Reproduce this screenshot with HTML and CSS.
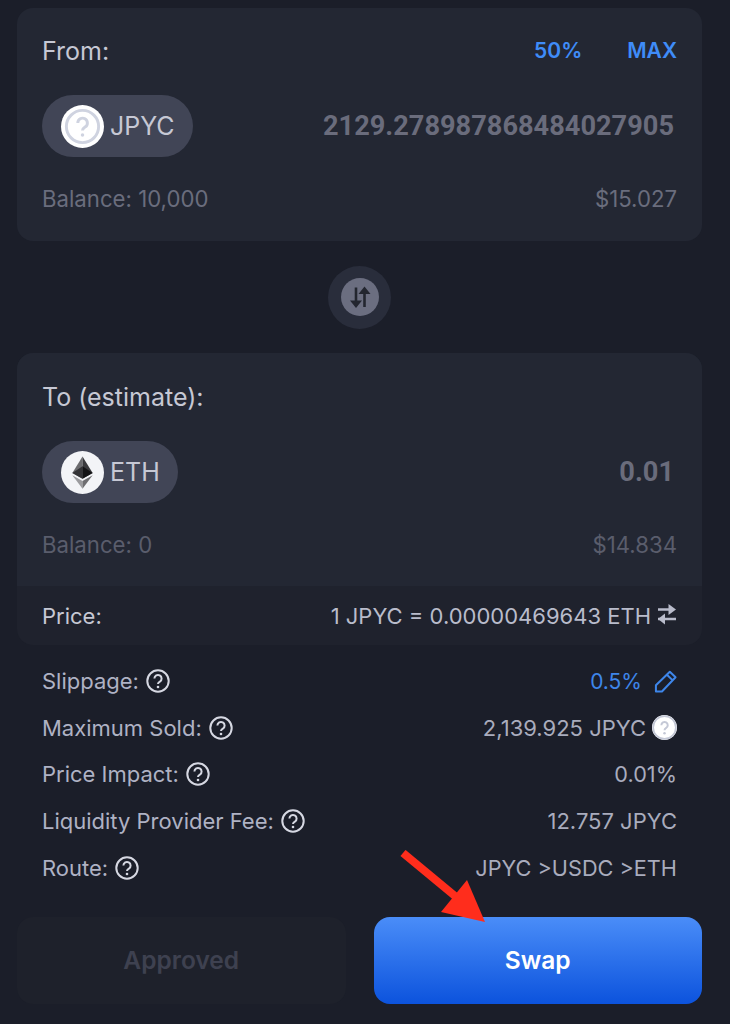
FILE: index.html
```html
<!DOCTYPE html>
<html lang="en">
<head>
<meta charset="utf-8">
<title>Swap</title>
<link rel="stylesheet" href="styles.css">
</head>
<body>
<main class="page">
  <section class="card from-card">
    <div class="card-head">
      <span class="label">From:</span>
      <div class="quick">
        <span>50%</span>
        <span>MAX</span>
      </div>
    </div>
    <div class="token-row">
      <div class="pill">
        <svg class="token-icon" viewBox="0 0 44 44"><circle cx="22" cy="22" r="22" fill="#fff"/><circle cx="22" cy="22" r="16.5" fill="none" stroke="#cfd3e0" stroke-width="3"/><path d="M17.2 18.4a4.9 4.9 0 1 1 7.4 4.2c-1.6 1-2.6 1.8-2.6 3.6" fill="none" stroke="#cfd3e0" stroke-width="3"/><circle cx="22" cy="30.6" r="1.8" fill="#cfd3e0"/></svg>
        <span>JPYC</span>
      </div>
      <span class="amount">2129.278987868484027905</span>
    </div>
    <div class="card-foot">
      <span>Balance: 10,000</span>
      <span>$15.027</span>
    </div>
  </section>

  <div class="switch-wrap">
    <div class="switch">
      <div class="switch-inner">
        <svg viewBox="0 0 38 38"><path d="M15 9.500v15" stroke="#23262f" stroke-width="2.600" fill="none"/><path d="M9 22.500h12l-6 7.500z" fill="#23262f"/><path d="M23.500 29v-15" stroke="#23262f" stroke-width="2.600" fill="none"/><path d="M17.500 16h12l-6-7.500z" fill="#23262f"/></svg>
      </div>
    </div>
  </div>

  <section class="card to-card">
    <div class="to-main">
      <div class="card-head to-head">
        <span class="label">To (estimate):</span>
      </div>
      <div class="token-row">
        <div class="pill">
          <svg class="token-icon" viewBox="0 0 44 44"><circle cx="22" cy="22" r="22" fill="#f3f4f7"/><path d="M22 5.500 11.600 22.500 22 28.500z" fill="#6b6b6e"/><path d="M22 5.500 32.400 22.500 22 28.500z" fill="#3a3a3d"/><path d="M22 15.500 11.600 22.500 22 28.500z" fill="#333336"/><path d="M22 15.500 32.400 22.500 22 28.500z" fill="#141416"/><path d="M11.600 24.800 22 30.800v7.700z" fill="#9b9b9e"/><path d="M32.400 24.800 22 30.800v7.700z" fill="#6e6e71"/></svg>
          <span>ETH</span>
        </div>
        <span class="amount">0.01</span>
      </div>
      <div class="card-foot dim">
        <span>Balance: 0</span>
        <span>$14.834</span>
      </div>
    </div>
    <div class="price-row">
      <span>Price:</span>
      <span class="price-value">1 JPYC = 0.00000469643 ETH
        <svg class="price-swap" viewBox="0 0 20 22"><path d="M1 6.500h13M1 16h18" stroke="#b9bccb" stroke-width="2.400" fill="none"/><path d="M11.500 1 19 6.500l-7.500 5.500z" fill="#b9bccb"/><path d="M8 10.500 1 16l7 5.500z" fill="#b9bccb"/></svg>
      </span>
    </div>
  </section>

  <section class="details">
    <div class="detail">
      <span class="detail-label">Slippage: <svg class="help"><use href="#help"/></svg></span>
      <span class="detail-value blue">0.5%
        <svg class="pencil" viewBox="0 0 24 24"><path d="M2 22.500v-6.500L16.500 1.800l6 5.700L8.300 22.500z M13.500 5l6 5.800" fill="none" stroke="#3e86ea" stroke-width="2.100" stroke-linejoin="round"/></svg>
      </span>
    </div>
    <div class="detail">
      <span class="detail-label">Maximum Sold: <svg class="help"><use href="#help"/></svg></span>
      <span class="detail-value">2,139.925 JPYC
        <svg class="mini-token" viewBox="0 0 44 44"><circle cx="22" cy="22" r="22" fill="#fff"/><circle cx="22" cy="22" r="20" fill="none" stroke="#c4c8d6" stroke-width="3"/><path d="M16.500 18a5.600 5.600 0 1 1 8.500 4.800c-1.800 1.100-3 2.100-3 4" fill="none" stroke="#c4c8d6" stroke-width="3.500"/><circle cx="22" cy="32" r="2.200" fill="#c4c8d6"/></svg>
      </span>
    </div>
    <div class="detail">
      <span class="detail-label">Price Impact: <svg class="help"><use href="#help"/></svg></span>
      <span class="detail-value tight">0.01%</span>
    </div>
    <div class="detail">
      <span class="detail-label">Liquidity Provider Fee: <svg class="help"><use href="#help"/></svg></span>
      <span class="detail-value">12.757 JPYC</span>
    </div>
    <div class="detail">
      <span class="detail-label">Route: <svg class="help"><use href="#help"/></svg></span>
      <span class="detail-value tight">JPYC &gt;USDC &gt;ETH</span>
    </div>
  </section>

  <div class="actions">
    <div class="btn btn-off">Approved</div>
    <div class="btn btn-on">Swap</div>
  </div>

  <svg class="arrow" viewBox="0 0 100 90"><path d="M3 3 61 51" stroke="#ff2d1c" stroke-width="8" fill="none"/><path d="M85 72 67 30 41 62z" fill="#ff2d1c"/></svg>
</main>

<svg class="defs" aria-hidden="true"><symbol id="help" viewBox="0 0 24 24"><circle cx="12" cy="12" r="10.700" fill="none" stroke="#d6d8e2" stroke-width="2"/><path d="M8.400 9.500a3.600 3.600 0 1 1 5.500 3.100c-1.200.7-1.900 1.300-1.900 2.500" fill="none" stroke="#d6d8e2" stroke-width="2"/><circle cx="12" cy="18" r="1.300" fill="#d6d8e2"/></symbol></svg>
</body>
</html>
```

FILE: styles.css
```css
* { box-sizing: border-box; }
html, body { margin: 0; padding: 0; }
body {
  width: 730px;
  height: 1024px;
  overflow: hidden;
  background: #1b1e29;
  font-family: Inter, "Liberation Sans", sans-serif;
  color: #a9acbd;
}
.page {
  position: relative;
  height: 1024px;
  padding: 8px 28px 0 17px;
}
.card {
  background: #232733;
  border-radius: 16px;
  overflow: hidden;
}
.from-card { height: 233px; padding: 0 25px; }
.card-head {
  height: 86px;
  display: flex;
  justify-content: space-between;
  align-items: center;
}
.to-head { height: 87px; }
.label { font-size: 25px; color: #c6c8d4; }
.quick {
  display: flex;
  gap: 45px;
  font-size: 21px;
  font-weight: 600;
  color: #3f8cf8;
  margin-top: -2px;
}
.token-row {
  display: flex;
  justify-content: space-between;
  align-items: center;
  height: 62px;
  margin-top: 1px;
}
.pill {
  display: flex;
  align-items: center;
  height: 62px;
  padding: 0 18px 0 19px;
  gap: 6px;
  border-radius: 31px;
  background: #414556;
  font-size: 25px;
  color: #c6c8d4;
}
.token-icon { width: 43px; height: 43px; flex: none; }
.amount {
  font-family: Roboto, sans-serif;
  font-size: 27.200px;
  font-weight: 700;
  color: #6a6c7c;
  padding-right: 3px;
}
.card-foot {
  display: flex;
  justify-content: space-between;
  align-items: center;
  margin-top: 23px;
  height: 36px;
  font-size: 22.200px;
  color: #6a6d7d;
}
.switch-wrap {
  height: 112px;
  display: flex;
  align-items: center;
  justify-content: center;
}
.switch {
  width: 63px;
  height: 63px;
  border-radius: 50%;
  background: #292d3b;
  display: flex;
  align-items: center;
  justify-content: center;
}
.switch-inner {
  width: 38px;
  height: 38px;
  border-radius: 50%;
  background: #6b6e80;
}
.switch-inner svg { display: block; width: 38px; height: 38px; }
.to-card { height: 292px; background: #1f222d; }
.to-main { height: 233px; padding: 0 25px; background: #232733; }
.to-main .card-foot { color: #5a5d6c; }
.price-row {
  height: 59px;
  padding: 0 25px;
  display: flex;
  justify-content: space-between;
  align-items: center;
  font-size: 22px;
  color: #c6c8d4;
}
.price-value { display: flex; align-items: center; gap: 6px; color: #b9bccb; }
.price-swap { width: 20px; height: 22px; margin-top: -4px; }
.details { margin-top: 13px; padding: 0 25px; }
.detail {
  height: 46.600px;
  display: flex;
  justify-content: space-between;
  align-items: center;
  font-size: 22px;
}
.detail-label { display: flex; align-items: center; gap: 7px; color: #afb2c4; }
.detail-value { display: flex; align-items: center; gap: 6px; color: #a9acbd; }
.detail-value.tight { font-size: 21.700px; }
.detail-value.blue { color: #3e86ea; gap: 12px; font-size: 21px; }
.help { width: 24px; height: 24px; }
.pencil { width: 23px; height: 23px; }
.mini-token { width: 25px; height: 25px; }
.actions {
  position: absolute;
  left: 17px;
  right: 28px;
  top: 917px;
  display: flex;
  gap: 28px;
}
.btn {
  flex: 1;
  height: 87px;
  border-radius: 16px;
  display: flex;
  align-items: center;
  justify-content: center;
  font-size: 24.500px;
  font-weight: 600;
  padding-bottom: 2px;
}
.btn-off { background: #1e212b; color: #3e4150; }
.btn-on {
  background: linear-gradient(#4a8df8, #0c53dd);
  color: #fff;
}
.arrow {
  position: absolute;
  left: 400px;
  top: 850px;
  width: 100px;
  height: 90px;
}
.defs { position: absolute; width: 0; height: 0; }
```
